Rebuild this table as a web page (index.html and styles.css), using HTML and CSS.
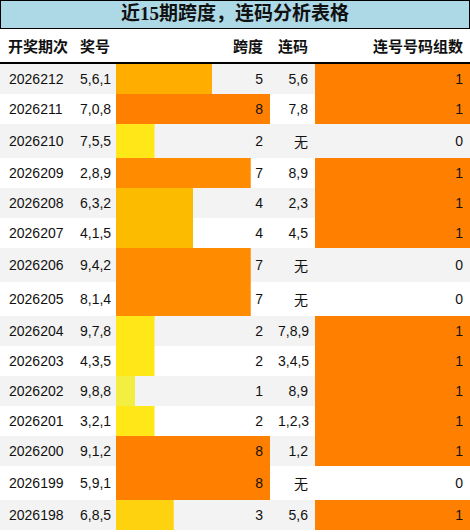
FILE: index.html
```html
<!DOCTYPE html>
<html lang="zh-CN">
<head>
  <meta charset="UTF-8">
  <meta name="viewport" content="width=device-width, initial-scale=1.0">
  <title>近15期跨度，连码分析表格</title>
  <link rel="stylesheet" href="styles.css">
</head>
<body>
  <div class="title">近15期跨度，连码分析表格</div>
  <table class="report">
    <colgroup>
      <col class="c-issue">
      <col class="c-nums">
      <col class="c-span">
      <col class="c-link">
      <col class="c-count">
    </colgroup>
    <thead>
      <tr>
        <th class="left">开奖期次</th>
        <th>奖号</th>
        <th>跨度</th>
        <th>连码</th>
        <th>连号号码组数</th>
      </tr>
    </thead>
    <tbody id="rows"></tbody>
  </table>

  <script>
    const data = [
      ['2026212', '5,6,1', 5, '5,6', 1],
      ['2026211', '7,0,8', 8, '7,8', 1],
      ['2026210', '7,5,5', 2, '无', 0],
      ['2026209', '2,8,9', 7, '8,9', 1],
      ['2026208', '6,3,2', 4, '2,3', 1],
      ['2026207', '4,1,5', 4, '4,5', 1],
      ['2026206', '9,4,2', 7, '无', 0],
      ['2026205', '8,1,4', 7, '无', 0],
      ['2026204', '9,7,8', 2, '7,8,9', 1],
      ['2026203', '4,3,5', 2, '3,4,5', 1],
      ['2026202', '9,8,8', 1, '8,9', 1],
      ['2026201', '3,2,1', 2, '1,2,3', 1],
      ['2026200', '9,1,2', 8, '1,2', 1],
      ['2026199', '5,9,1', 8, '无', 0],
      ['2026198', '6,8,5', 3, '5,6', 1]
    ];

    // colour of the span bar, from light yellow (1) to orange (8)
    const spanColors = {
      1: '#f2ef42', 2: '#ffe718', 3: '#ffd20f', 4: '#fdbb00',
      5: '#ffae00', 6: '#ff9d00', 7: '#ff8c00', 8: '#ff8000'
    };
    const maxSpan = 8;

    const tbody = document.querySelector('#rows');
    data.forEach(([issue, nums, span, link, count]) => {
      const tr = document.createElement('tr');
      const color = spanColors[span];
      const width = (span / maxSpan * 100) + '%';
      tr.innerHTML =
        '<td class="left">' + issue + '</td>' +
        '<td>' + nums + '</td>' +
        '<td class="span" style="background-image: linear-gradient(' + color + ',' + color + '); background-size: ' + width + ' 100%">' + span + '</td>' +
        '<td>' + link + '</td>' +
        '<td class="' + (count > 0 ? 'hit' : '') + '">' + count + '</td>';
      tbody.appendChild(tr);
    });
  </script>
</body>
</html>
```

FILE: styles.css
```css
* {
  margin: 0;
  padding: 0;
  box-sizing: border-box;
}
body {
  width: 470px;
  font-family: "Liberation Sans", "Noto Sans CJK SC", sans-serif;
  font-size: 14px;
  color: #111;
  background: #fff;
}
.title {
  height: 29px;
  border: 1px solid #000;
  background-color: #add8e6;
  text-align: center;
  font-family: "Liberation Serif", "Noto Sans CJK SC", serif;
  font-size: 19px;
  font-weight: bold;
  line-height: 26px;
}
.report {
  width: 470px;
  border-collapse: collapse;
  table-layout: fixed;
}
.c-issue { width: 72px; }
.c-nums { width: 44px; }
.c-span { width: 154px; }
.c-link { width: 45px; }
.c-count { width: 155px; }
.report th {
  font-family: "Noto Sans CJK SC", sans-serif;
  font-size: 15px;
  font-weight: bold;
  text-align: right;
  padding: 6px 7px 6px 8px;
  border-bottom: 2px solid #000;
  white-space: nowrap;
}
.report td {
  text-align: right;
  padding: 7px 7px 7px 8px;
  white-space: nowrap;
}
.report th.left,
.report td.left {
  text-align: left;
}
.report td.left {
  padding-left: 9px;
}
.report tbody tr:nth-child(odd) {
  background-color: #f3f3f3;
}
.report tbody tr:nth-child(even) {
  background-color: #fff;
}
.report td.span {
  background-repeat: no-repeat;
  background-position: left top;
}
.report td.hit {
  background-color: #ff8000;
}
```
